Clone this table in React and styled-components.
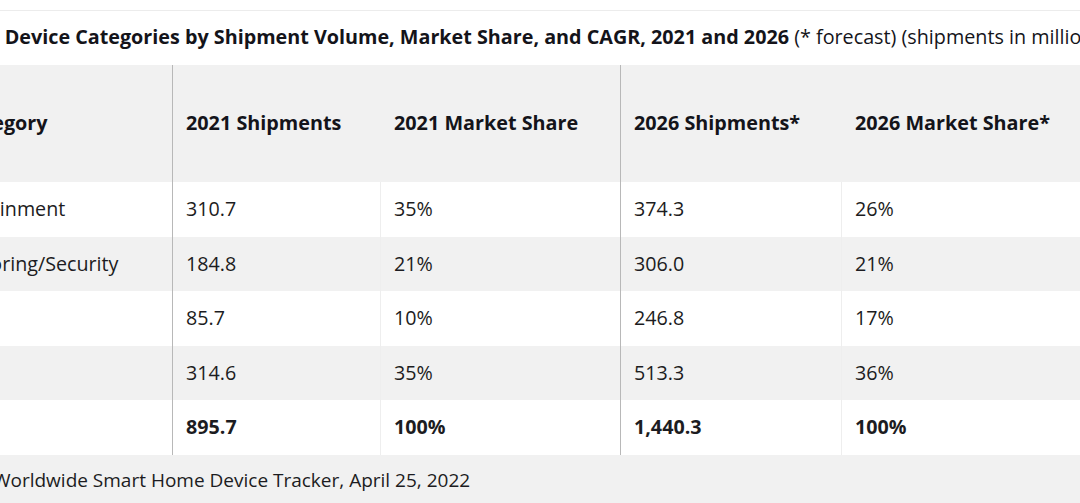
import React from 'react'
import styled, { createGlobalStyle } from 'styled-components'

const GlobalStyle = createGlobalStyle`
	html, body {
		margin: 0;
		padding: 0;
		background: #fff;
		overflow: hidden;
	}
	body {
		font-family: "Open Sans", "Noto Sans", sans-serif;
		color: #1c1c21;
	}
`

const Frame = styled.div`
	width: 1700px;
	margin-left: -170px;
	padding-top: 10px;
`

const Title = styled.div`
	border-top: 1px solid #ececec;
	padding: 12px 0 15px 5px;
	font-size: 19.75px;
	line-height: 27px;
	white-space: nowrap;
	color: #14141a;

	& strong {
		font-weight: 700;
	}
`

const Table = styled.table`
	margin-left: 33px;
	border-collapse: separate;
	border-spacing: 0;
	table-layout: fixed;
	width: 1459px;
	font-size: 19.7px;
	line-height: 26.6px;
`

const HeadCell = styled.th`
	height: 117px;
	box-sizing: border-box;
	padding: 0 13px;
	text-align: left;
	vertical-align: middle;
	font-weight: 700;
	font-size: 19.8px;
	white-space: nowrap;
	background: #f1f1f1;
	color: #14141a;
	border-right: 1px solid ${p => (p.$strong ? '#b8b8b8' : '#f1f1f1')};
`

const Row = styled.tr`
	background: ${p => (p.$shaded ? '#f1f1f1' : '#fff')};
`

const Cell = styled.td`
	padding: 14px 13px;
	text-align: left;
	white-space: nowrap;
	font-weight: ${p => (p.$bold ? 700 : 400)};
	border-right: 1px solid ${p => (p.$strong ? '#b8b8b8' : '#eeeeee')};
`

const Source = styled.td`
	padding: 12px 0 14px 23px;
	background: #f1f1f1;
	font-size: 19px;
	line-height: 26px;
	white-space: nowrap;
`

const columns = [310, 208, 240, 221, 260, 220]

const headers = [
	'Product Category',
	'2021 Shipments',
	'2021 Market Share',
	'2026 Shipments*',
	'2026 Market Share*',
	'CAGR*',
]

const rows = [
	['Video Entertainment', '310.7', '35%', '374.3', '26%', '3.8%'],
	['Home Monitoring/Security', '184.8', '21%', '306.0', '21%', '10.6%'],
	['Lighting', '85.7', '10%', '246.8', '17%', '23.6%'],
	['Others', '314.6', '35%', '513.3', '36%', '10.3%'],
]

const total = ['Total', '895.7', '100%', '1,440.3', '100%', '10.0%']

// the two darker rules sit after the category and the 2021 share columns
const strongAfter = [0, 2]

const App = () => {
	return (
		<>
			<GlobalStyle />
			<Frame>
				<Title>
					<strong>Top Smart Home Device Categories by Shipment Volume, Market Share, and CAGR, 2021 and 2026</strong> (* forecast) (shipments in millions)
				</Title>
				<Table>
					<colgroup>
						{columns.map((w, i) => (
							<col key={i} style={{ width: w }} />
						))}
					</colgroup>
					<thead>
						<tr>
							{headers.map((h, i) => (
								<HeadCell key={h} $strong={strongAfter.includes(i)}>{h}</HeadCell>
							))}
						</tr>
					</thead>
					<tbody>
						{rows.map((r, ri) => (
							<Row key={r[0]} $shaded={ri % 2 === 1}>
								{r.map((v, i) => (
									<Cell key={i} $strong={strongAfter.includes(i)}>{v}</Cell>
								))}
							</Row>
						))}
						<Row>
							{total.map((v, i) => (
								<Cell key={i} $bold={i > 0} $strong={strongAfter.includes(i)}>{v}</Cell>
							))}
						</Row>
					</tbody>
					<tfoot>
						<tr>
							<Source colSpan={6}>Source: IDC Worldwide Smart Home Device Tracker, April 25, 2022</Source>
						</tr>
					</tfoot>
				</Table>
			</Frame>
		</>
	)
}

export default App
